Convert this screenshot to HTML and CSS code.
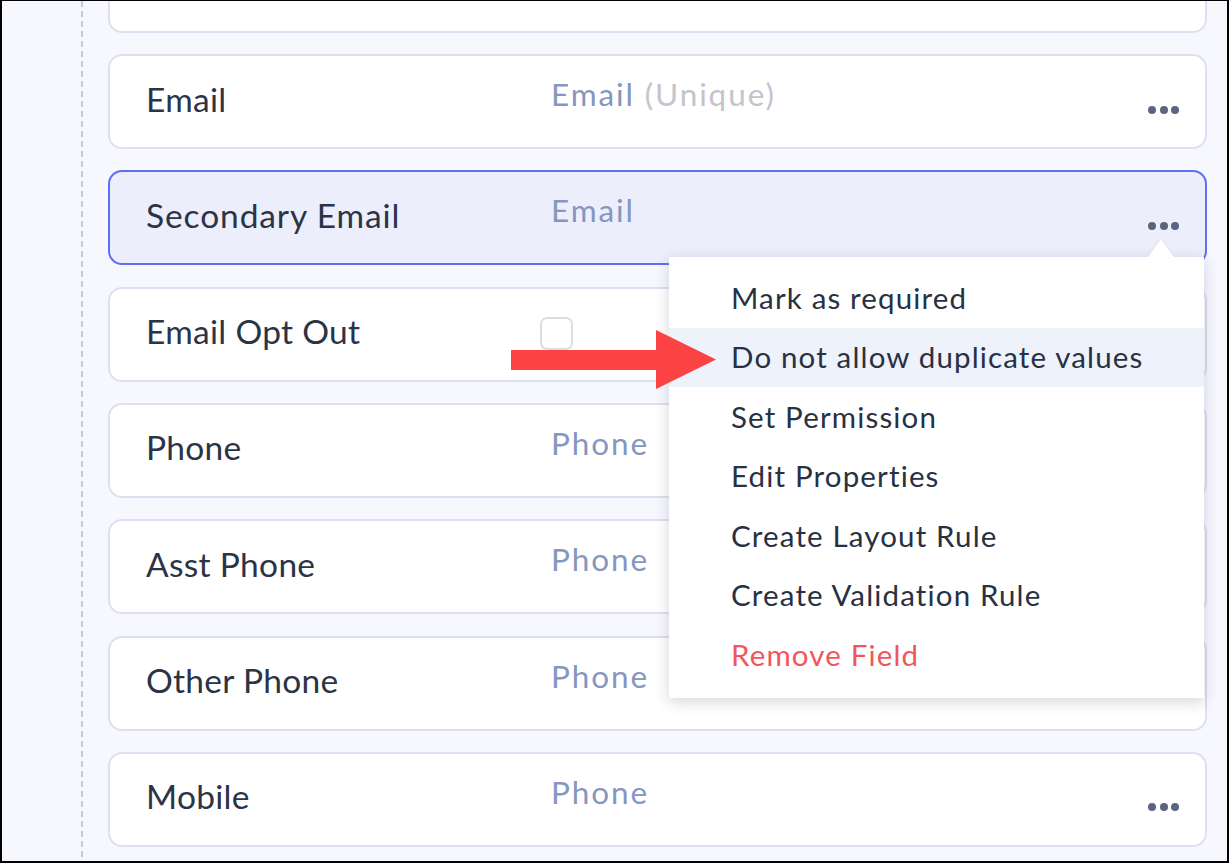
FILE: index.html
```html
<!DOCTYPE html>
<html lang="en">
<head>
<meta charset="utf-8">
<title>Fields</title>
<link rel="stylesheet" href="styles.css">
</head>
<body>
<div class="page">
  <div class="gutter"><div class="rail"></div></div>
  <div class="list">
    <div class="card"></div>
    <div class="card">
      <div class="label">Email</div>
      <div class="type">Email <span class="muted">(Unique)</span></div>
      <div class="dots"><i></i><i></i><i></i></div>
    </div>
    <div class="card selected">
      <div class="label wide">Secondary Email</div>
      <div class="type">Email</div>
      <div class="dots"><i></i><i></i><i></i></div>
    </div>
    <div class="card">
      <div class="label">Email Opt Out</div>
      <div class="type"><span class="checkbox"></span></div>
    </div>
    <div class="card">
      <div class="label">Phone</div>
      <div class="type">Phone</div>
    </div>
    <div class="card">
      <div class="label">Asst Phone</div>
      <div class="type">Phone</div>
    </div>
    <div class="card">
      <div class="label">Other Phone</div>
      <div class="type">Phone</div>
    </div>
    <div class="card">
      <div class="label">Mobile</div>
      <div class="type">Phone</div>
      <div class="dots"><i></i><i></i><i></i></div>
    </div>
  </div>
</div>

<div class="menu">
  <span class="caret"></span>
  <div class="item">Mark as required</div>
  <div class="item active">Do not allow duplicate values</div>
  <div class="item">Set Permission</div>
  <div class="item">Edit Properties</div>
  <div class="item">Create Layout Rule</div>
  <div class="item">Create Validation Rule</div>
  <div class="item danger">Remove Field</div>
</div>

<svg class="arrow" width="205" height="59" viewBox="0 0 205 59" aria-hidden="true">
  <rect x="0" y="20" width="146" height="20" fill="#fb4343"/>
  <polygon points="145,0 205,29.5 145,59" fill="#fb4343"/>
</svg>
</body>
</html>
```

FILE: styles.css
```css
* { box-sizing: border-box; }

html, body {
  margin: 0;
  padding: 0;
}

body {
  width: 1229px;
  height: 863px;
  overflow: hidden;
  font-family: "Lato", "Liberation Sans", sans-serif;
  background: #f7f8fe;
}

.page {
  height: 863px;
  display: flex;
  border: 2px solid #000;
  border-top-width: 1px;
  background: #f7f8fe;
  overflow: hidden;
}

.gutter {
  width: 106px;
  flex: none;
  display: flex;
}

.rail {
  width: 2px;
  margin-left: 79px;
  height: 100%;
  background: repeating-linear-gradient(to bottom, #c9c9d0 0 6px, transparent 6px 10px);
}

.list {
  flex: 1;
  display: flex;
  flex-direction: column;
  gap: 21.33px;
  margin-top: -63.33px;
  padding-right: 20px;
}

.card {
  flex: none;
  height: 95px;
  border: 2px solid #e0dff1;
  border-radius: 14px;
  background: #fff;
  display: flex;
  align-items: flex-start;
  padding: 0 26px 0 36px;
}

.card.selected {
  background: #eceefb;
  border-color: #5f6ff2;
}

.label {
  width: 405px;
  flex: none;
  margin-top: 22.5px;
  font-size: 33.5px;
  line-height: 40px;
  letter-spacing: 0.3px;
  color: #2b3446;
}

.label.wide {
  letter-spacing: 0.9px;
}

.type {
  flex: 1;
  margin-top: 19px;
  font-size: 31.5px;
  line-height: 38px;
  letter-spacing: 1.9px;
  color: #8597bf;
}

.type .muted {
  color: #c4c4cc;
}

.checkbox {
  display: block;
  width: 33px;
  height: 33px;
  margin: 9px 0 0 -11px;
  border: 2px solid #dcdce6;
  border-radius: 7px;
  background: #fff;
}

.dots {
  flex: none;
  display: flex;
  gap: 3.4px;
  margin-top: 49.5px;
}

.dots i {
  display: block;
  width: 8px;
  height: 8px;
  border-radius: 50%;
  background: #5b6581;
}

.menu {
  position: absolute;
  left: 669px;
  top: 257px;
  width: 535px;
  height: 441px;
  padding: 11px 0 13px;
  background: #fff;
  box-shadow: 0 4px 14px rgba(30, 30, 60, 0.18);
}

.caret {
  position: absolute;
  left: 479px;
  top: -18px;
  width: 0;
  height: 0;
  border-left: 13.5px solid transparent;
  border-right: 13.5px solid transparent;
  border-bottom: 18px solid #fff;
  filter: drop-shadow(0 -1px 1px rgba(30, 30, 60, 0.06));
}

.item {
  height: 59.5px;
  display: flex;
  align-items: center;
  padding-left: 62px;
  padding-bottom: 1px;
  font-size: 29.5px;
  letter-spacing: 1.15px;
  color: #283142;
}

.item.active {
  background: #eef2fb;
}

.item.danger {
  color: #f2565b;
}

.arrow {
  position: absolute;
  left: 511px;
  top: 330px;
}
```
